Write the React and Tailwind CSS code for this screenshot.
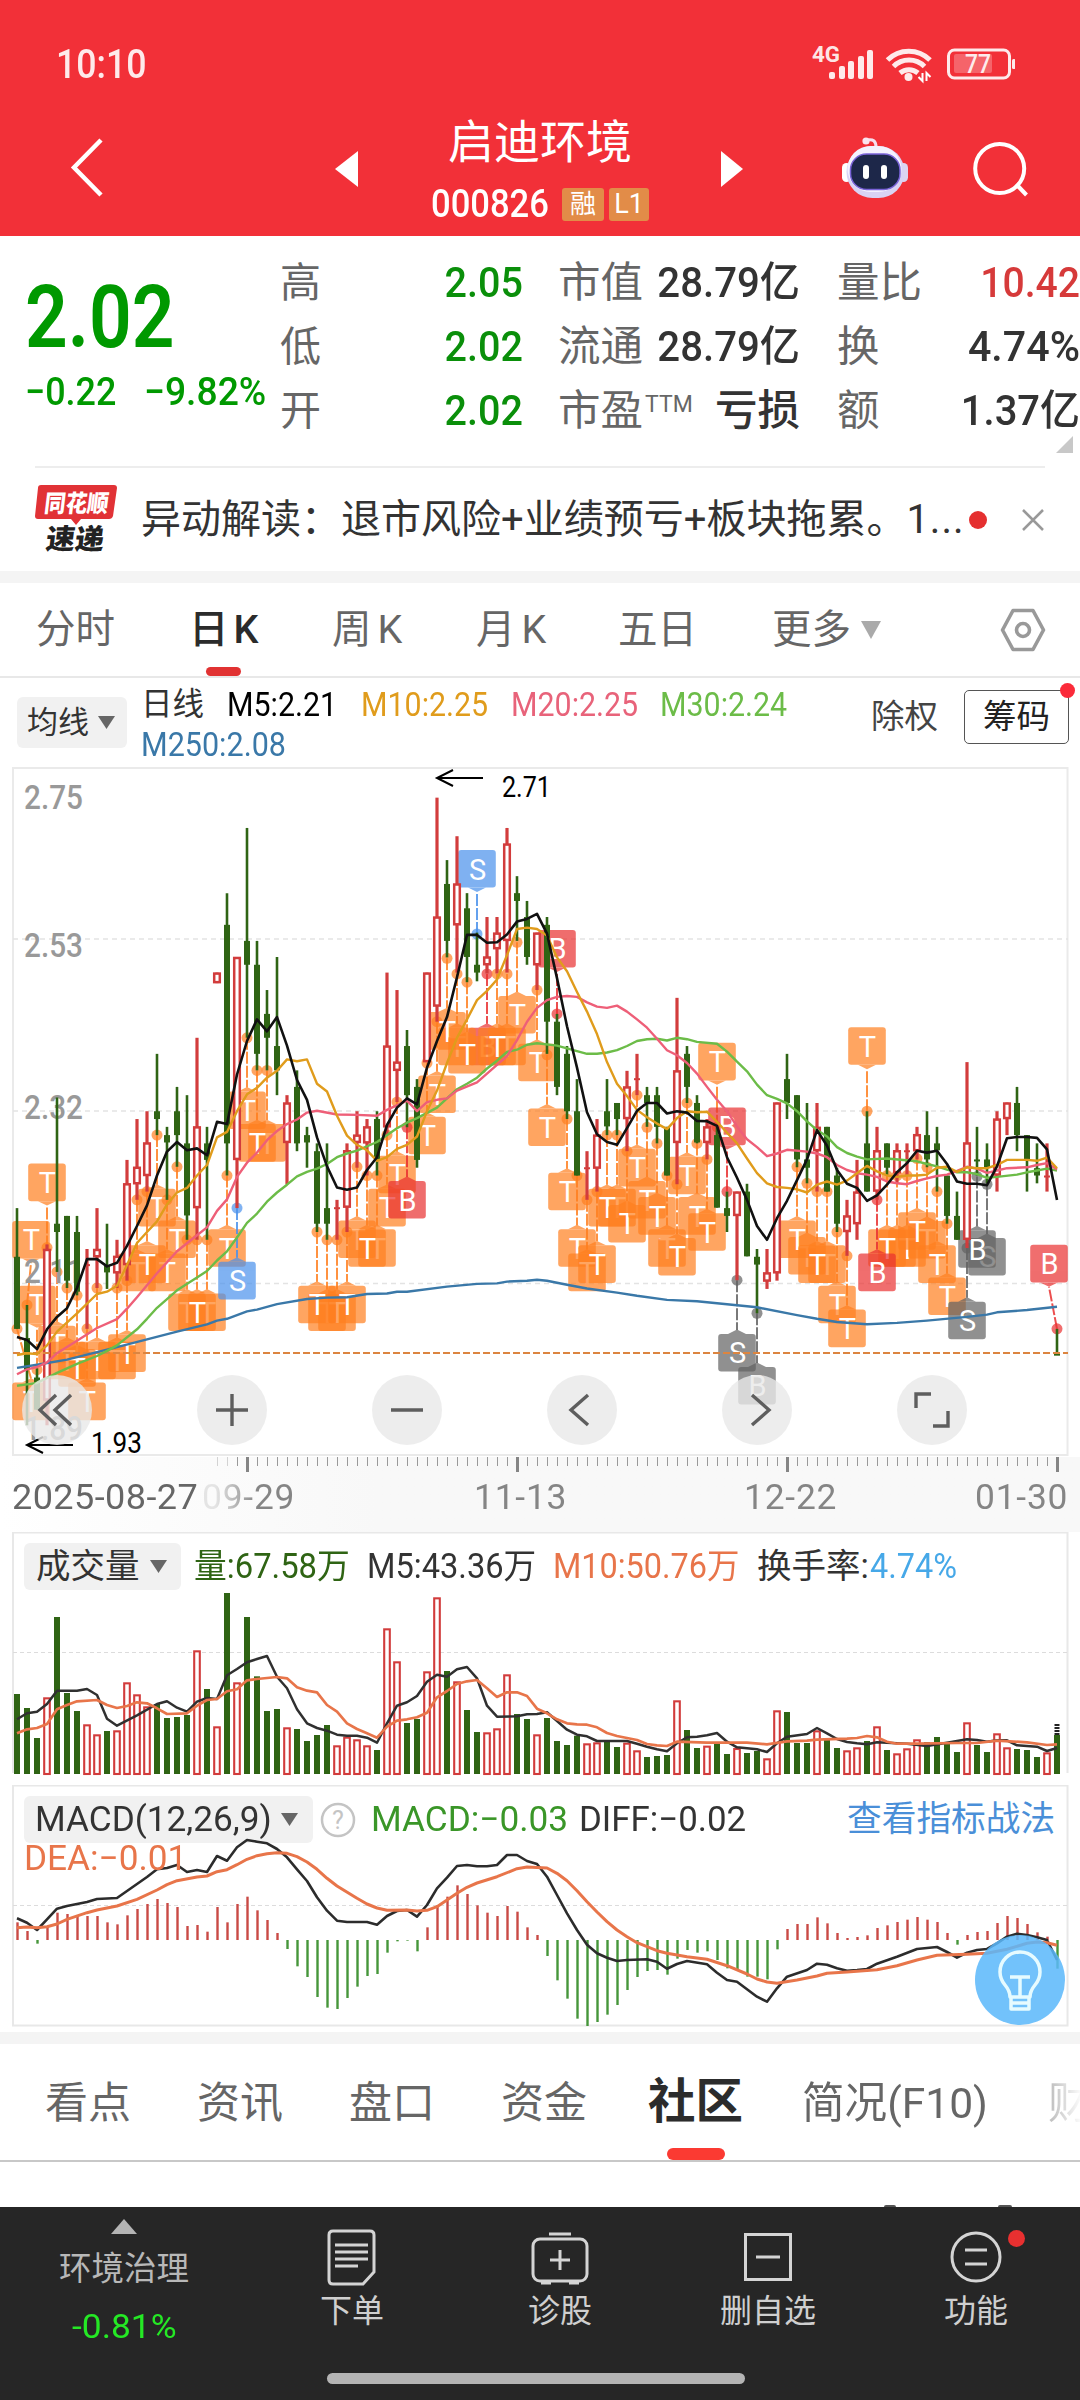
import { Fragment } from 'react';

const GREEN = '#2f6414';
const RED = '#d23c3c';

// [direction, high, body top, body bottom, low]
const candles = [
  ['g',976,1082,1239,1239],['g',1187,1259,1328,1449],['g',1325,1345,1415,1415],['r',1055,1065,1395,1449],['g',735,1010,1028,1115],
  ['g',993,993,1134,1150],['g',993,1028,1158,1166],['r',1065,1098,1100,1239],['r',976,1065,1083,1150],['g',1010,1100,1116,1152],
  ['r',1045,1080,1118,1150],['r',871,922,1100,1134],['r',782,886,924,958],['r',765,833,906,940],['g',640,765,782,817],
  ['g',799,817,833,958],['g',712,765,817,886],['g',730,835,992,1045],['r',605,798,976,1045],['g',799,835,871,1045],
  ['r',463,463,486,486],['g',290,359,835,905],['r',429,429,871,976],['g',148,394,446,605],['g',394,446,640,676],
  ['g',501,553,605,676],['g',429,623,676,730],['r',730,746,834,924],['g',676,712,835,852],['g',799,817,833,888],
  ['g',835,852,1010,1028],['g',835,976,1010,1045],['r',958,974,976,1045],['r',835,850,975,1028],['r',765,816,834,888],
  ['r',782,798,835,905],['g',765,782,871,905],['r',463,622,800,817],['r',501,657,677,745],['g',588,623,730,800],
  ['g',695,712,871,888],['r',463,463,658,658],['r',82,341,537,570],['g',218,270,394,430],['r',166,269,360,463],
  ['g',290,323,429,484],['g',376,446,463,482],['r',342,428,447,465],['r',342,376,412,465],['r',148,182,394,463],
  ['g',253,290,307,394],['g',307,342,429,446],['r',376,376,447,501],['g',342,359,570,640],['g',553,570,712,730],
  ['g',623,640,765,782],['g',695,765,905,905],['r',852,887,889,958],['r',782,816,890,940],['g',695,765,798,817],
  ['g',747,747,782,817],['r',677,711,782,852],['r',640,693,695,730],['g',712,730,747,799],['g',712,730,799,835],
  ['g',799,799,905,905],['r',518,676,834,924],['g',623,640,712,747],['g',730,747,833,835],['r',782,798,834,870],
  ['g',799,817,975,975],['g',940,976,993,1028],['r',940,940,993,1133],['g',923,940,1081,1081],['g',1065,1082,1099,1205],
  ['r',1065,1116,1136,1152],['r',746,746,1118,1134],['g',640,695,747,782],['g',730,730,870,887],['g',747,870,888,922],
  ['r',747,799,852,940],['g',799,799,940,940],['g',888,905,1010,1028],['r',958,992,1028,1080],['r',871,940,1011,1045],
  ['g',765,835,940,940],['r',799,850,940,958],['g',835,835,888,905],['r',835,850,900,922],['r',835,850,852,905],
  ['r',799,815,852,870],['g',765,817,870,887],['g',799,835,850,940],['g',905,905,993,1010],['g',940,993,1045,1045],
  ['r',658,833,1045,1063],['g',799,870,872,905],['g',835,870,888,922],['r',765,781,905,940],['r',746,746,782,817],
  ['g',712,747,817,852],['g',817,817,870,940],['g',835,889,905,922],['r',835,905,907,940],['g',1239,1293,1295,1295],
];

const volumes = [
  762,804,894,772,531,759,813,853,883,873,871,727,763,799,792,834,831,825,631,747,859,459,727,531,709,813,807,862,867,903,
  885,855,916,890,898,916,930,565,664,849,837,694,472,693,724,810,876,877,865,703,822,837,883,834,903,915,887,910,907,903,
  921,908,931,951,948,945,781,870,924,917,909,942,924,939,933,955,811,816,909,909,871,900,924,931,922,903,859,930,940,925,
  898,906,891,909,936,847,915,936,880,922,927,930,951,937,885,
];

const macd = [
  427,453,491,440,398,402,408,408,408,427,433,406,387,372,357,369,381,438,435,455,381,427,372,350,391,420,459,507,559,591,
  651,683,687,654,620,588,582,518,484,482,514,442,376,350,316,342,376,398,408,378,395,442,465,528,601,656,716,738,726,704,
  675,630,591,573,570,584,536,510,518,514,540,565,570,590,590,598,508,447,432,432,412,430,459,474,471,466,444,436,426,419,
  411,419,426,459,494,465,456,453,429,408,414,432,457,470,566,
];

const ma5 = [
  1257,1263,1283,1240,1213,1194,1150,1087,1087,1103,1095,1058,1015,970,905,853,832,850,846,861,788,793,685,612,565,591,560,622,
  697,740,822,885,931,936,931,893,865,795,757,737,750,670,612,560,473,381,381,398,397,380,352,346,335,378,475,580,670,767,815,
  832,838,802,764,747,747,770,765,768,786,787,797,865,910,958,1015,1045,998,960,915,870,806,840,893,923,932,960,948,925,898,
  878,851,855,851,880,918,923,923,926,885,824,821,821,823,848,958,
].map((v, i) => [i, v]);

// flat lists of index,value pairs
const pairs = s => s.split(' ').map(p => p.split(',').map(Number));
const ma10 = pairs('0,1296 1,1292 2,1294 3,1275 4,1245 6,1205 8,1163 9,1158 10,1145 11,1100 12,1052 13,1028 14,1005 15,968 16,942 17,932 18,905 19,882 20,822 21,810 22,765 23,728 24,714 25,692 26,677 27,652 28,656 29,652 30,705 31,722 32,775 33,818 34,838 35,850 36,873 37,865 38,847 39,838 40,820 41,765 42,720 43,660 44,605 45,565 46,523 47,503 48,478 49,425 50,368 51,365 52,368 53,382 54,430 55,460 56,505 57,548 58,597 59,658 60,705 61,732 62,762 63,778 64,792 65,804 66,780 67,765 68,767 69,766 70,788 71,812 72,835 73,868 74,900 75,922 76,930 77,932 78,935 79,942 80,925 81,918 82,925 83,916 84,900 85,884 86,896 87,905 88,908 89,905 90,905 91,903 92,888 93,886 94,897 95,887 96,889 97,889 98,882 99,871 100,871 101,871 102,873 103,866 104,889');
const ma20 = pairs('0,1338 1,1327 2,1322 3,1312 4,1292 6,1265 8,1237 10,1218 11,1195 12,1170 14,1118 16,1070 18,1035 19,1018 20,982 21,957 22,908 23,877 24,855 25,828 26,808 27,793 28,783 29,768 30,764 32,772 34,773 36,775 37,762 39,742 40,765 41,745 42,740 43,737 44,720 46,702 48,664 49,645 50,610 51,570 52,540 53,523 54,516 55,514 56,516 57,528 58,537 59,540 60,535 61,548 62,565 63,583 64,607 65,632 66,643 67,660 68,683 69,712 70,740 71,765 72,798 73,826 74,843 75,863 76,857 77,849 79,853 80,857 81,865 82,882 83,893 84,900 85,903 86,908 87,918 88,922 89,924 90,917 91,911 92,906 93,903 94,895 95,886 96,890 97,899 98,894 99,889 101,887 102,882 103,878 104,892');
const ma30 = pairs('0,1363 1,1360 2,1357 4,1335 6,1315 8,1298 9,1287 10,1275 12,1240 13,1217 14,1193 16,1155 18,1127 19,1113 20,1090 21,1070 22,1040 23,1008 24,988 25,962 26,942 27,925 28,907 29,897 30,890 31,880 32,865 33,857 34,851 36,832 38,802 39,790 40,780 42,757 43,737 44,717 45,705 46,692 47,672 48,655 49,636 50,631 51,620 52,617 54,622 56,634 57,640 58,640 59,637 60,632 61,623 62,612 63,608 64,607 65,611 66,605 67,608 68,614 70,618 71,635 72,657 73,678 74,707 75,730 76,738 77,748 78,765 79,787 80,806 81,820 82,843 83,856 84,864 85,870 87,868 90,874 91,880 92,885 93,892 94,898 95,898 96,902 97,910 98,908 100,903 101,898 102,894 103,890 104,894');
const ma250 = pairs('0,1324 2,1317 5,1306 10,1279 13,1262 16,1245 19,1229 20,1221 21,1217 23,1201 24,1197 26,1185 29,1174 31,1171 33,1170 35,1163 37,1162 38,1158 39,1158 43,1147 46,1141 48,1140 49,1136 51,1134 52,1132 53,1134 55,1143 57,1151 60,1160 62,1167 65,1176 68,1179 70,1183 74,1192 78,1209 80,1217 82,1224 85,1229 88,1226 91,1221 95,1213 97,1208 98,1203 101,1198 104,1191');
const vol5 = pairs('0,838 1,820 2,815 3,792 4,752 6,752 7,747 8,765 9,836 10,857 12,826 14,792 15,784 16,803 17,815 18,785 19,774 20,777 21,706 22,687 23,667 24,657 25,648 26,710 27,745 28,808 29,850 30,864 31,872 32,884 33,887 34,887 35,893 36,908 37,850 38,797 39,787 40,768 41,725 42,704 43,710 44,688 45,681 46,715 47,797 48,830 50,829 51,823 52,822 53,817 54,843 55,869 56,884 57,889 58,903 61,903 62,911 63,920 64,928 65,934 66,910 67,892 68,890 69,886 70,879 71,905 72,922 74,928 75,936 76,910 77,890 79,882 80,864 81,880 82,897 83,906 84,910 85,913 86,907 89,911 91,918 93,908 95,898 96,900 97,905 98,901 99,901 100,916 102,920 103,933 104,924');
const vol10 = pairs('0,880 1,868 2,864 3,852 4,808 5,795 6,784 8,780 9,795 10,804 11,798 12,787 13,790 14,805 15,822 17,820 18,797 19,780 20,777 21,754 22,748 23,721 24,717 26,711 27,715 28,742 29,752 30,757 31,795 32,815 33,850 34,867 35,880 36,893 37,860 38,842 39,838 40,832 41,818 42,772 43,753 44,732 45,724 46,720 47,745 48,771 49,757 50,757 51,768 52,806 53,820 54,838 55,850 56,853 57,854 58,862 59,879 60,888 61,894 62,900 63,912 64,916 65,918 66,905 69,908 73,908 75,913 77,904 79,902 80,899 83,896 84,894 85,888 86,892 87,905 88,911 90,911 94,909 96,909 98,902 101,907 103,915 104,913');
const diff = pairs('0,415 1,428 2,450 3,418 4,386 5,378 7,366 8,357 10,354 11,333 12,312 13,291 14,268 15,264 16,255 17,276 18,270 19,276 20,228 21,242 22,202 23,180 24,185 25,190 26,207 27,232 28,268 29,303 30,352 31,392 32,422 33,426 35,426 36,434 37,408 38,393 39,390 40,410 41,375 42,325 43,293 44,258 45,255 46,259 47,259 48,255 49,225 50,225 51,243 52,252 53,290 54,345 55,400 56,450 57,494 58,520 59,533 60,543 61,540 63,538 64,545 65,566 66,552 67,543 69,553 70,578 71,600 72,605 74,650 75,665 76,625 77,590 79,570 80,551 81,554 82,565 83,572 84,570 85,567 86,551 88,530 90,507 92,501 93,516 94,533 95,518 96,510 97,507 98,490 99,470 100,461 101,465 102,472 103,480 104,540');
const dea = pairs('0,443 1,441 2,443 3,440 4,432 5,418 7,398 8,390 10,378 12,358 14,330 15,314 16,302 18,291 19,288 20,275 21,269 22,254 23,238 24,227 25,221 26,218 27,220 28,230 29,246 30,268 31,295 32,318 34,355 35,372 36,384 37,391 39,390 40,393 41,391 42,380 43,360 44,340 45,322 46,309 48,290 50,266 51,261 53,264 54,280 55,302 56,332 57,365 58,396 59,425 60,450 61,470 62,488 63,500 64,512 65,520 67,530 69,538 71,557 73,582 74,597 75,606 76,610 78,600 80,588 81,580 83,576 86,569 88,557 90,540 92,526 95,523 97,520 99,508 101,490 102,486 103,488 104,496');

// trade badges hanging under the candle, later ones cover earlier ones
const below = pairs('0,1239 4,1115 5,1150 7,1239 8,1150 10,1150 11,1134 12,958 14,817 15,958 16,886 17,1045 19,1045 21,905 23,605 25,676 31,1045 32,1045 34,886 36,905 37,817 38,745 41,660 42,570 44,466 43,432 49,466 50,397 52,501 53,642 55,782 56,905 57,958 60,817 59,817 61,852 63,800 62,730 64,835 65,905 67,747 68,835 69,870 79,922 78,886 81,940 82,1028 83,1080 88,905 89,905 87,905 91,887 90,868 92,940 93,1010 6,1166 13,940 18,1045 24,676 30,1028 33,1028 35,905 58,940 66,924 80,940').map(([i, dot]) => ({ i, dot, t: 'T' }));
const above = pairs('1,1187 2,1328 3,1062 70,799 85,765').map(([i, dot]) => ({ i, dot, t: 'T', up: true }));
const badges = [
  ...above,
  { i: 54, dot: 553, t: 'B', c: '#e93030', up: true },
  { i: 47, dot: 466, t: 'B', c: '#e93030' },
  ...below,
  { i: 45, dot: 484, t: 'T' },
  { i: 48, dot: 466, t: 'T' },
  { i: 22, dot: 976, t: 'S', c: '#4a91ec' },
  { i: 39, dot: 800, t: 'B', c: '#e93030' },
  { i: 46, dot: 379, t: 'S', c: '#4a91ec', up: true },
  { i: 71, dot: 940, t: 'B', c: '#e93030', up: true },
  { i: 72, dot: 1133, t: 'S', c: '#626262' },
  { i: 74, dot: 1205, t: 'B', c: '#626262' },
  { i: 86, dot: 958, t: 'B', c: '#e93030' },
  { i: 95, dot: 1063, t: 'S', c: '#626262' },
  { i: 97, dot: 924, t: 'S', c: '#626262' },
  { i: 96, dot: 907, t: 'B', c: '#626262' },
  { i: 104, dot: 1239, t: 'B', c: '#e93030', up: true },
];

const X = i => 17 + i * 10;
const kY = v => 760 + v / 2.178;
const vY = v => 1440 + v / 3;
const mY = v => 1780 + v / 3;

function Line({ data, y, color, w = 2.4 }) {
  return <polyline points={data.map(([i, v]) => `${X(i)},${y(v).toFixed(1)}`).join(' ')} fill="none" stroke={color} strokeWidth={w} strokeLinejoin="round" />;
}

function Badge({ i, dot, t, c = '#ff7f1f', up }) {
  const x = X(i);
  const cx = Math.min(Math.max(x, 31), 1049);
  const y = kY(dot);
  const top = up ? y - 84 : y + 53.7;
  const edge = up ? top + 42 : top - 4;
  return (
    <g>
      <line x1={x} y1={y} x2={cx} y2={edge} stroke={c} strokeWidth="2" strokeDasharray="12 2" opacity=".85" />
      <circle cx={x} cy={y} r="5.5" fill={c} opacity=".7" />
      <g fill={c} opacity=".7">
        <rect x={cx - 18.8} y={top} width="37.6" height="37.6" rx="3" />
        {up
          ? <path d={`M${cx - 9} ${top + 37.6}h18l-9 4.4z`} />
          : <path d={`M${cx - 9} ${top}h18l-9 -4.4z`} />}
      </g>
      <text x={cx + 0.5} y={top + 29.5} fontSize="29" textAnchor="middle" fill="#fff">{t}</text>
    </g>
  );
}

function Arrow({ x, y }) {
  return <path d={`M${x + 46} ${y}H${x}M${x + 16} ${y - 8}L${x} ${y}L${x + 16} ${y + 8}`} fill="none" stroke="#000" strokeWidth="2" />;
}

function Candle({ row: [d, hi, a, b, lo], x }) {
  const h = kY(b) - kY(a);
  const red = d === 'r';
  return (
    <g stroke={red ? RED : GREEN} fill={red ? '#fff' : GREEN}>
      <line x1={x} x2={x} y1={kY(hi)} y2={kY(lo)} strokeWidth={red ? 3.2 : 2.6} />
      {red && h > 3
        ? <rect x={x - 2.8} y={kY(a) + 1} width="5.6" height={h - 2} strokeWidth="2.5" />
        : <rect x={x - 3} y={kY(a)} width="6" height={Math.max(h, 2)} stroke="none" fill={red ? RED : GREEN} />}
    </g>
  );
}

function KChart() {
  return (
    <svg width="1080" height="690" viewBox="0 767 1080 690" className="block">
      <rect x="13" y="768" width="1054.500" height="687" fill="none" stroke="#eaeaea" strokeWidth="2" />
      {[939, 1111, 1283.5].map(y => <line key={y} x1="13" x2="1068" y1={y} y2={y} stroke="#e3e3e3" strokeWidth="1.5" strokeDasharray="5 4" />)}
      {badges.map(b => <Badge key={b.i} {...b} />)}
      <g fontSize="33.500" fill="#999" fontWeight="500">
        {[['2.75', 809], ['2.53', 957], ['2.32', 1119], ['2.11', 1283], ['1.89', 1440]].map(([t, y]) => (
          <text key={t} x="24" y={y} textLength="59" lengthAdjust="spacingAndGlyphs">{t}</text>
        ))}
      </g>
      {candles.map((row, i) => <Candle key={i} row={row} x={X(i)} />)}
      <line x1="13" x2="1068" y1="1353" y2="1353" stroke="#dc8540" strokeWidth="2" strokeDasharray="7 3" />
      <Line data={ma250} y={kY} color="#3a78a8" />
      <Line data={ma30} y={kY} color="#6cbc48" />
      <Line data={ma20} y={kY} color="#ee5f78" />
      <Line data={ma10} y={kY} color="#e09c1c" />
      <Line data={ma5} y={kY} color="#111" w={2.6} />
      <Arrow x={437} y={778} />
      <Arrow x={27} y={1445} />
      <g fontSize="30" fill="#000">
        <text x="502" y="797" textLength="49" lengthAdjust="spacingAndGlyphs">2.71</text>
        <text x="91" y="1453" textLength="51" lengthAdjust="spacingAndGlyphs">1.93</text>
      </g>
      {[57, 232, 407, 582, 757, 932].map(x => <circle key={x} cx={x} cy="1410" r="35" fill="#e8e8e8" opacity=".8" />)}
      <g fill="none" stroke="#5e5e5e" strokeWidth="3.4">
        <path d="M56 1395L40 1410L56 1425M71 1395L55 1410L71 1425" />
        <path d="M216 1410h32M232 1394v32M391 1410h32" />
        <path d="M588 1395L571 1410L588 1425M752 1395L769 1410L752 1425" />
        <path d="M916 1408v-14h15M933 1426h15v-15" />
      </g>
    </svg>
  );
}

function Ruler() {
  return (
    <svg width="1080" height="16" viewBox="0 1456 1080 16" className="block">
      {Array.from({ length: 85 }, (_, k) => k + 20).map(i => {
        const major = [23, 50, 77, 104].includes(i);
        return <line key={i} x1={X(i) + 0.5} x2={X(i) + 0.5} y1="1456" y2={major ? 1471 : 1465} stroke={major ? '#858585' : '#999'} strokeWidth={major ? 3 : 1} opacity={i < 22 ? 0.4 : 1} />;
      })}
    </svg>
  );
}

function VolumeChart() {
  return (
    <svg width="1080" height="253" viewBox="0 1532 1080 253" className="absolute inset-0">
      <path d="M13 1773V1532.500H1067.500V1773" fill="none" stroke="#e8e8e8" strokeWidth="2" />
      <line x1="13" x2="1068" y1="1652.500" y2="1652.500" stroke="#dcdcdc" strokeDasharray="4 3" />
      {volumes.map((v, i) => candles[i][0] === 'r'
        ? <rect key={i} x={X(i) - 2.8} y={vY(v) + 1} width="5.6" height={1773 - vY(v)} fill="#fff" stroke={RED} strokeWidth="2.1" />
        : <rect key={i} x={X(i) - 3} y={vY(v)} width="6" height={1774 - vY(v)} fill={GREEN} />)}
      <path d="M1057 1724v11" stroke="#222" strokeWidth="5" strokeDasharray="2 1" />
      <Line data={vol5} y={vY} color="#303030" w={2.5} />
      <Line data={vol10} y={vY} color="#e8754a" w={2.7} />
    </svg>
  );
}

function MacdChart() {
  return (
    <svg width="1080" height="247" viewBox="0 1785 1080 247" className="absolute inset-0">
      <rect x="13" y="1785.500" width="1054.500" height="240" fill="none" stroke="#e8e8e8" strokeWidth="2" />
      <line x1="13" x2="1068" y1="1905.500" y2="1905.500" stroke="#dcdcdc" strokeDasharray="4 3" />
      {macd.map((v, i) => <line key={i} x1={X(i) + 0.5} x2={X(i) + 0.5} y1="1940" y2={mY(v)} stroke={v < 480 ? '#c94a45' : '#46963a'} strokeWidth="2.4" />)}
      <Line data={diff} y={mY} color="#2c2c2c" w={2.6} />
      <Line data={dea} y={mY} color="#e8754a" w={3} />
    </svg>
  );
}

function Tri({ className = '' }) {
  return <svg width="17" height="13" viewBox="0 0 17 13" className={className}><path d="M0 0h17L8.500 13z" fill="currentColor" /></svg>;
}

// condensed figures in a cell of fixed width
function Num({ w, className, children }) {
  return (
    <span className="block shrink-0 whitespace-nowrap" style={{ width: w }}>
      <span className={`inline-block origin-left ${className}`}>{children}</span>
    </span>
  );
}

const quotes = [
  ['高', '2.05', '市值', '28.79亿', '量比', '10.42'],
  ['低', '2.02', '流通', '28.79亿', '换', '4.74%'],
  ['开', '2.02', '市盈', '亏损', '额', '1.37亿'],
];

function StatusBar() {
  return (
    <div className="flex h-[128px] items-center pl-[56px] pr-[62px] text-white">
      <Num w={753} className="mt-[2px] text-[41px] scale-x-[.87] text-white/90 font-medium">10:10</Num>
      <svg width="206" height="50" viewBox="809 39 206 50" fill="#fff" fillOpacity=".9">
        <text x="812" y="62" fontSize="22" fontWeight="700" textLength="28" lengthAdjust="spacingAndGlyphs">4G</text>
        <rect x="829" y="72" width="6" height="7" rx="2" /><rect x="839" y="66" width="6" height="13" rx="2" />
        <rect x="848" y="61" width="6" height="18" rx="2" /><rect x="858" y="56" width="6" height="23" rx="2" />
        <rect x="867" y="50" width="6" height="29" rx="2" />
        <g fill="none" stroke="#fff" strokeOpacity=".9" strokeWidth="5">
          <path d="M887.500 60a30 30 0 0 1 42.500 0M893.500 66.500a22 22 0 0 1 31 0M900 73a14 14 0 0 1 18 0" />
        </g>
        <circle cx="908.500" cy="77" r="4" />
        <path d="M922.500 73v8l-4-4M926.500 81v-8l4 4" stroke="#fff" strokeWidth="2" fill="none" />
        <rect x="948.500" y="50" width="61" height="28" rx="6" fill="none" stroke="#fff" strokeOpacity=".9" strokeWidth="3" />
        <rect x="954" y="54" width="38" height="19" rx="2" fillOpacity=".25" />
        <text x="978" y="73" fontSize="25" fontWeight="500" textAnchor="middle" textLength="26" lengthAdjust="spacingAndGlyphs">77</text>
        <rect x="1012" y="59" width="3.500" height="10" rx="1.500" />
      </svg>
    </div>
  );
}

function Robot() {
  return (
    <svg width="70" height="70" viewBox="0 0 70 70">
      <path d="M27 6q9-2 9 7" fill="none" stroke="#f6dfee" strokeWidth="3" strokeLinecap="round" />
      <circle cx="26" cy="7" r="3.600" fill="#fbe3ee" />
      <rect x="2" y="29" width="9" height="19" rx="4.500" fill="#fff" /><rect x="59" y="29" width="9" height="19" rx="4.500" fill="#dcd4f0" />
      <rect x="6.500" y="12" width="58" height="52" rx="26" fill="#d9d3f4" />
      <rect x="7.500" y="12" width="54" height="46" rx="23" fill="#f4f2fe" />
      <rect x="10.500" y="20" width="49.500" height="35.500" rx="16" fill="#1d2749" stroke="#7a63d8" strokeWidth="1.500" />
      <rect x="23" y="31" width="6" height="14" rx="3" fill="#fff" /><rect x="41" y="31" width="6" height="14" rx="3" fill="#fff" />
    </svg>
  );
}

function Header() {
  return (
    <header className="h-[236px] bg-[#f23038]">
      <StatusBar />
      <div className="flex h-[108px] pl-[70px] text-white">
        <svg width="34" height="62" viewBox="0 0 34 62" className="mt-[9px]"><path d="M31 3L4 30.500L31 58" fill="none" stroke="#fff" strokeWidth="4.500" /></svg>
        <svg width="23" height="36" viewBox="0 0 23 36" className="ml-[231px] mt-[23px]"><path d="M23 0v36L0 18z" fill="#fff" /></svg>
        <div className="ml-[72px] w-[291px]">
          <div className="-mt-[11px] pl-[18px] text-[46px] leading-[50px]">启迪环境</div>
          <div className="mt-[20px] flex h-[34px] items-center">
            <Num w={132} className="ml-[1px] text-[38px] leading-none scale-x-[.91] font-medium">000826</Num>
            <span className="flex h-[33px] w-[42px] items-center justify-center rounded-[3px] bg-[#e28c48] text-[26px] leading-none">融</span>
            <span className="ml-[5px] flex h-[33px] w-[40px] items-center justify-center rounded-[3px] bg-[#e28c48] text-[27px] leading-none">L1</span>
          </div>
        </div>
        <svg width="22" height="36" viewBox="0 0 22 36" className="mt-[23px]"><path d="M0 0v36l22-18z" fill="#fff" /></svg>
        <div className="ml-[97px] mt-[6px]"><Robot /></div>
        <svg width="60" height="62" viewBox="0 0 60 62" className="ml-[60px] mt-[13px]">
          <circle cx="29.700" cy="27.500" r="24.500" fill="none" stroke="#fff" strokeWidth="4" /><path d="M46 43l10.500 11" stroke="#fff" strokeWidth="4" />
        </svg>
      </div>
    </header>
  );
}

function Quote() {
  return (
    <section className="relative h-[230px]">
      <div className="flex pt-[15px]">
        <div className="w-[280px] shrink-0 pl-[25px] text-[#009900]">
          <div className="mt-[22px] h-[88px] origin-left scale-x-[.86] whitespace-nowrap text-[87px] font-semibold leading-[88px]">2.02</div>
          <div className="mt-[9px] flex text-[39px] font-medium leading-[44px]">
            <Num w={119} className="scale-x-[.92]">−0.22</Num>
            <Num w={130} className="scale-x-[.955]">−9.82%</Num>
          </div>
        </div>
        <div className="w-[800px] text-[42.5px] leading-[64px] text-[#333]">
          {quotes.map(([a, b, c, d, e, f], k) => (
            <div key={a} className="flex h-[64px] items-center whitespace-nowrap">
              <span className="w-[40px] text-[41px] text-[#666]">{a}</span>
              <span className="w-[203px] origin-right scale-x-[.93] text-right font-medium text-[#0a8f0a]">{b}</span>
              <span className="ml-[35px] flex w-[136px] shrink-0 items-center text-[#666]">{c}{k === 2 && <span className="-mt-[14px] ml-[2px] text-[23px] leading-none">TTM</span>}</span>
              <span className={`w-[106px] origin-right text-right font-medium ${k === 2 ? '' : 'scale-x-[.945]'}`}><span className="float-right">{d}</span></span>
              <span className="ml-[37px] w-[88px] text-[#666]">{e}</span>
              <span className={`w-[155px] origin-right text-right font-medium ${k === 0 ? 'text-[#d63a3a] scale-x-[.92]' : k === 1 ? 'scale-x-[.97]' : 'scale-x-[.94]'}`}>{f}</span>
            </div>
          ))}
        </div>
      </div>
      <svg width="17" height="17" className="absolute right-[7px] top-[200px]"><path d="M17 0v17H0z" fill="#c8c8c8" /></svg>
    </section>
  );
}

function News() {
  return (
    <section className="mx-[35px] flex h-[105px] items-center border-t-2 border-[#ededed]">
      <svg width="84" height="72" viewBox="0 0 84 72" className="shrink-0">
        <path d="M6 1h73q3 0 3 3l-4 28q-1 3-4 3H46l-5 6l-5-6H3q-3 0-3-3L3 4q0-3 3-3z" fill="#e13236" />
        <g fontWeight="900" transform="skewX(-7)">
          <text x="12" y="28" fontSize="24" fill="#fff" textLength="64" lengthAdjust="spacingAndGlyphs">同花顺</text>
          <text x="18" y="65" fontSize="28" fill="#222" textLength="58" lengthAdjust="spacingAndGlyphs">速递</text>
        </g>
      </svg>
      <p className="ml-[22px] w-[828px] whitespace-nowrap text-[40px] leading-none text-[#333]">异动解读：退市风险+业绩预亏+板块拖累。<span className="tracking-[1px]">1...</span></p>
      <i className="h-[18px] w-[18px] shrink-0 rounded-full bg-[#e53030]" />
      <svg width="22" height="22" className="ml-[35px] shrink-0"><path d="M1 1l20 20M21 1L1 21" stroke="#999" strokeWidth="2.500" /></svg>
    </section>
  );
}

function PeriodTabs() {
  return (
    <nav className="relative flex h-[95px] items-center border-b-2 border-[#e8e8e8] pl-[36px] text-[39.5px] leading-none text-[#666]">
      <span className="w-[153px]">分时</span>
      <span className="w-[143px] font-medium text-[#2b2b2b]">日<span className="ml-[5px]">K</span></span>
      <span className="w-[144px]">周<span className="ml-[6px]">K</span></span>
      <span className="w-[142px]">月<span className="ml-[6px]">K</span></span>
      <span className="w-[154px]">五日</span>
      <span className="flex w-[228px] items-center">更多<svg width="20" height="18" className="ml-[10px]"><path d="M0 0h20L10 18z" fill="#aaa" /></svg></span>
      <svg width="46" height="44" viewBox="0 0 46 44"><path d="M13 2.500h20L43.500 22L33 41.500H13L2.500 22z" fill="none" stroke="#999" strokeWidth="3.600" strokeLinejoin="round" /><circle cx="23" cy="22" r="6.500" fill="none" stroke="#999" strokeWidth="3.600" /></svg>
      <i className="absolute bottom-0 left-[206px] h-[9px] w-[35px] rounded-full bg-[#e13232]" />
    </nav>
  );
}

function MaRow() {
  return (
    <div className="flex h-[89px] pl-[17px] text-[33px]">
      <div className="mt-[19px] flex h-[51px] w-[110px] items-center rounded-[6px] bg-[#f1f1f1] pl-[10px] text-[31px] leading-none text-[#333]">均线<Tri className="ml-[9px] text-[#666]" /></div>
      <div className="ml-[14px] w-[730px] pt-[6px]">
        <div className="flex h-[41px] items-center leading-none">
          <span className="w-[86px] text-[31.5px] text-[#333]">日线</span>
          <Num w={134} className="scale-x-[.92] text-black">M5:2.21</Num>
          <Num w={150} className="scale-x-[.92] text-[#e09c1c]">M10:2.25</Num>
          <Num w={149} className="scale-x-[.92] text-[#e8637a]">M20:2.25</Num>
          <Num w={140} className="scale-x-[.92] text-[#6cbc48]">M30:2.24</Num>
        </div>
        <div className="flex h-[38px] items-center leading-none"><Num w={200} className="scale-x-[.925] text-[#3a78a8]">M250:2.08</Num></div>
      </div>
      <div className="flex h-[77px] items-center text-[33.5px] leading-none text-[#444]">
        <span className="w-[93px]">除权</span>
        <span className="relative flex h-[54px] w-[105px] items-center justify-center rounded-[5px] border-[1.5px] border-[#555] text-[#222]">筹码
          <i className="absolute -right-[7px] -top-[8px] h-[15px] w-[15px] rounded-full bg-[#fb2b3a]" />
        </span>
      </div>
    </div>
  );
}

function Dates() {
  return (
    <div className="flex h-[48px] items-center pl-[12px] text-[35px] leading-none text-[#858585]">
      <Num w={190} className="scale-x-[1.03] text-[#666]"><span className="tracking-[0.4px]">2025-08-27</span></Num>
      <Num w={272} className="scale-x-[1.01] bg-gradient-to-r from-[#e4e4e4] from-15% to-[#858585] to-60% bg-clip-text text-transparent tracking-[0.8px]">09-29</Num>
      <Num w={270} className="scale-x-[1.01] tracking-[0.8px]">11-13</Num>
      <Num w={231} className="scale-x-[1.01] tracking-[0.8px]">12-22</Num>
      <Num w={100} className="scale-x-[1.01] tracking-[0.8px]">01-30</Num>
    </div>
  );
}

function Volume() {
  return (
    <section className="relative h-[253px] bg-white">
      <VolumeChart />
      <div className="relative flex items-center pl-[24px] pt-[11px] text-[34.5px] leading-none">
        <div className="mr-[13px] flex h-[47px] w-[157px] items-center rounded-[6px] bg-[#f1f1f1] pl-[12px] text-[#333]">成交量<Tri className="ml-[10px] text-[#666]" /></div>
        <Num w={173} className="scale-x-[.95] text-[#2f6414]">量:67.58万</Num>
        <Num w={186} className="scale-x-[.945] text-[#333]">M5:43.36万</Num>
        <Num w={204} className="scale-x-[.94] text-[#e8754a]">M10:50.76万</Num>
        <Num w={113} className="text-[#333]">换手率:</Num>
        <Num w={100} className="scale-x-[.94] text-[#46a8e8]">4.74%</Num>
      </div>
    </section>
  );
}

function Macd() {
  return (
    <section className="relative h-[247px] bg-white">
      <div className="absolute left-[24px] top-[11px] h-[47px] w-[289px] rounded-[6px] bg-[#f1f1f1]" />
      <MacdChart />
      <div className="relative flex h-[69px] items-center pl-[35px] text-[35px] leading-none text-[#333]">
        <Num w={246} className="scale-x-[1.005]">MACD(12,26,9)</Num>
        <Tri className="text-[#666]" />
        <svg width="36" height="36" className="ml-[22px] shrink-0"><circle cx="18" cy="18" r="16" fill="none" stroke="#c4c4c4" strokeWidth="2.500" /><text x="18" y="27" fontSize="25" textAnchor="middle" fill="#c4c4c4">?</text></svg>
        <div className="ml-[15px] flex">
          <Num w={208} className="scale-x-[1.005]">
            <span className="text-[#3a9628]">MACD:−0.03</span>
          </Num>
          <Num w={268} className="scale-x-[.995]">DIFF:−0.02</Num>
        </div>
        <span className="whitespace-nowrap text-[34.7px] text-[#4a8fd8]">查看指标战法</span>
      </div>
      <div className="relative -mt-[14px] pl-[24px] text-[35px] leading-[38px] text-[#e8754a]"><Num w={180} className="scale-x-[1.005]">DEA:−0.01</Num></div>
      <svg width="92" height="92" viewBox="0 0 92 92" className="absolute left-[974px] top-[149px]">
        <circle cx="46" cy="46" r="45" fill="#5bb8fa" opacity=".86" />
        <g fill="none" stroke="#e6fbff" strokeWidth="3.500" strokeLinejoin="round">
          <path d="M36 63q0-6-5-12q-5-6-5-13a20 20 0 0 1 40 0q0 7-5 13q-5 6-5 12z" />
          <path d="M37 63v12h18V63M37 69h18" /><path d="M36 43h20M46 43v20" />
        </g>
      </svg>
    </section>
  );
}

function SectionTabs() {
  return (
    <nav className="relative flex h-[118px] items-center overflow-hidden whitespace-nowrap border-b-2 border-[#c8c8c8] pl-[45px] pt-[2px] text-[43px] leading-none text-[#666]">
      {['看点', '资讯', '盘口', '资金'].map(t => <span key={t} className="w-[152px] shrink-0">{t}</span>)}
      <span className="-ml-[5px] w-[151px] shrink-0 text-[47.500px] font-bold text-[#2c2c2c]">社区</span>
      <span className="ml-[3px] w-[246px] shrink-0"><span className="inline-block origin-left scale-x-[.99]">简况(F10)</span></span>
      <span className="bg-gradient-to-r from-[#bbb] to-white to-40% bg-clip-text text-transparent">财务</span>
      <i className="absolute bottom-0 left-[667px] h-[12px] w-[58px] rounded-full bg-[#fb3a32]" />
    </nav>
  );
}

const actions = [
  ['下单', <Fragment key="a"><path d="M7 2h37q4 0 4 4v37l-11 12H7q-4 0-4-4V6q0-4 4-4z" /><path d="M9 16h33M9 23h33M9 30h33M9 37h23" /></Fragment>],
  ['诊股', <Fragment key="b"><rect x="-1" y="10" width="54" height="42" rx="7" /><path d="M15 5h22M26 21v20M16 31h20M7 54h10M35 54h10" /></Fragment>],
  ['删自选', <Fragment key="c"><rect x="3.500" y="5.500" width="45" height="45" /><path d="M14 28h24" /></Fragment>],
  ['功能', <Fragment key="d"><circle cx="26" cy="28" r="24" /><path d="M15 21h22M15 35h22" /></Fragment>],
];

function BottomBar() {
  return (
    <footer className="relative h-[193px] bg-[#262626] text-[32px] leading-none text-[#cfcfcf]">
      <div className="flex">
        <div className="flex w-[248px] flex-col items-center pt-[12px]">
          <svg width="26" height="15"><path d="M0 15L13 0l13 15z" fill="#b4b4b4" /></svg>
          <span className="mt-[19px] text-[32.500px] text-[#b8b8b8]">环境治理</span>
          <span className="mt-[23px] origin-center scale-x-[1.04] text-[34px] text-[#25e825]">-0.81%</span>
        </div>
        {actions.map(([t, icon]) => (
          <div key={t} className="relative flex w-[208px] flex-col items-center pt-[22px]">
            <svg width="52" height="56" viewBox="0 0 52 56" className="overflow-visible" fill="none" stroke="#d4d4d4" strokeWidth="3">{icon}</svg>
            <span className="mt-[10px] text-[32px]">{t}</span>
            {t === '功能' && <i className="absolute left-[136px] top-[23px] h-[17px] w-[17px] rounded-full bg-[#e83030]" />}
          </div>
        ))}
      </div>
      <i className="absolute left-[327px] top-[166px] h-[11px] w-[418px] rounded-full bg-[#b4b4b4]" />
    </footer>
  );
}

export default function App() {
  return (
    <div className="h-[2400px] w-[1080px] overflow-hidden bg-white font-['Roboto','Noto_Sans_CJK_SC',sans-serif]">
      <Header />
      <Quote />
      <News />
      <div className="h-[12px] bg-[#f4f4f4]" />
      <PeriodTabs />
      <MaRow />
      <KChart />
      <div className="h-[75px] bg-gradient-to-r from-white to-[#f8f8f8] to-35%"><Ruler /><Dates /></div>
      <Volume />
      <Macd />
      <div className="h-[12px] bg-[#f4f4f4]" />
      <SectionTabs />
      <div className="flex h-[45px] items-end">
        <i className="ml-[884px] h-[2px] w-[12px] rounded-t-full bg-[#555]" />
        <i className="ml-[102px] h-[2px] w-[14px] rounded-t-full bg-[#555]" />
      </div>
      <BottomBar />
    </div>
  );
}
